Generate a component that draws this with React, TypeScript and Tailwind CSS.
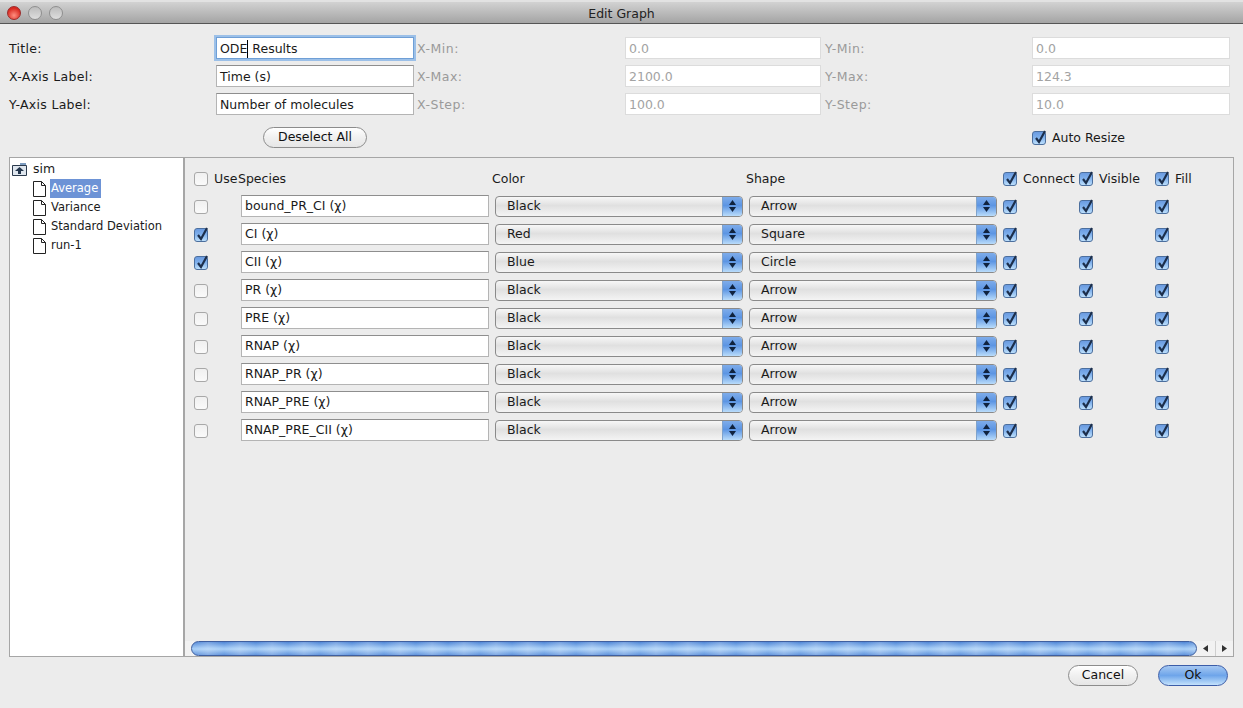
const species = [
  { name: 'bound_PR_CI', color: 'Black', shape: 'Arrow', use: false },
  { name: 'CI', color: 'Red', shape: 'Square', use: true },
  { name: 'CII', color: 'Blue', shape: 'Circle', use: true },
  { name: 'PR', color: 'Black', shape: 'Arrow', use: false },
  { name: 'PRE', color: 'Black', shape: 'Arrow', use: false },
  { name: 'RNAP', color: 'Black', shape: 'Arrow', use: false },
  { name: 'RNAP_PR', color: 'Black', shape: 'Arrow', use: false },
  { name: 'RNAP_PRE', color: 'Black', shape: 'Arrow', use: false },
  { name: 'RNAP_PRE_CII', color: 'Black', shape: 'Arrow', use: false },
]

function Check({ on = false }: { on?: boolean }) {
  return (
    <span
      className={`relative block w-[14px] h-[14px] shrink-0 rounded-[3px] border ${
        on
          ? 'border-[#4c6f9e] bg-[linear-gradient(#6b9be0,#7fb0ec_45%,#bcdffc)]'
          : 'border-[#a8a8a8] bg-[linear-gradient(#f0f0f0,#fafafa)]'
      }`}
    >
      {on && (
        <svg className="absolute left-0 top-[-4px] overflow-visible" width="15" height="17" viewBox="0 0 15 17">
          <path d="M3 10 L6 14 L12 3" fill="none" stroke="#1c2f4c" strokeWidth="2.2" />
        </svg>
      )}
    </span>
  )
}

function TextBox({ value, focused = false, disabled = false, form = false }: { value: string; focused?: boolean; disabled?: boolean; form?: boolean }) {
  return (
    <div
      className={`flex items-center h-[22px] px-[3px] bg-white border whitespace-nowrap ${form ? 'pt-[2px]' : ''} ${
        focused
          ? 'border-[#6f9fd6] shadow-[0_0_0_2px_#9cc0e8]'
          : disabled
            ? 'border-[#dcdcdc] text-[#a3a3a3]'
            : 'border-[#b4b4b4] border-t-[#8e8e8e]'
      }`}
    >
      {focused ? (
        <>
          <span className="border-r border-black">ODE</span>
          <span>&nbsp;Results</span>
        </>
      ) : (
        value
      )}
    </div>
  )
}

function Select({ value }: { value: string }) {
  return (
    <div className="flex h-[21px] rounded-[4px] border border-[#8a8a8a] overflow-hidden bg-[linear-gradient(#f7f7f7,#e0e0e0_45%,#f4f4f4)]">
      <span className="flex-1 pl-[11px] leading-[18px]">{value}</span>
      <span className="flex flex-col items-center justify-center gap-[2px] w-[20px] border-l border-[#7fa3cc] bg-[linear-gradient(#7eacea,#5c95e3_45%,#b9dcfb)]">
        <svg width="7" height="5" viewBox="0 0 7 5"><path d="M3.5 0 L7 5 H0 Z" fill="#10233f" /></svg>
        <svg width="7" height="5" viewBox="0 0 7 5"><path d="M0 0 H7 L3.5 5 Z" fill="#10233f" /></svg>
      </span>
    </div>
  )
}

function Pill({ label, primary = false, width }: { label: string; primary?: boolean; width: string }) {
  return (
    <button
      className={`h-[21px] ${width} rounded-full border text-[#111] ${
        primary
          ? 'border-[#3c5da8] bg-[linear-gradient(#a6c8f2,#6ea5ea_50%,#c4e2fc)]'
          : 'border-[#8c8c8c] bg-[linear-gradient(#ffffff,#f0f0f0_50%,#e6e6e6)]'
      }`}
    >
      {label}
    </button>
  )
}

function FileIcon() {
  return (
    <svg width="13" height="16" viewBox="0 0 13 16" className="shrink-0">
      <path d="M0.5 0.5 H8.5 L12.5 4.5 V15.5 H0.5 Z" fill="#fff" stroke="#222" />
      <path d="M8.5 0.5 V4.5 H12.5" fill="none" stroke="#222" />
    </svg>
  )
}

function FormRow({ label, value, xLabel, xValue, yLabel, yValue, focused }: {
  label: string; value: string; xLabel: string; xValue: string; yLabel: string; yValue: string; focused?: boolean
}) {
  return (
    <>
      <span className="tracking-[0.3px] pt-[2px]">{label}</span>
      <TextBox value={value} focused={focused} form />
      <span className="pl-[3px] pt-[2px] text-[#9a9a9a] tracking-[0.5px]">{xLabel}</span>
      <TextBox value={xValue} disabled form />
      <span className="pl-[4px] pt-[2px] text-[#9a9a9a] tracking-[0.5px]">{yLabel}</span>
      <TextBox value={yValue} disabled form />
    </>
  )
}

export default function App() {
  return (
    <div className="w-[1243px] h-[708px] overflow-hidden flex flex-col bg-[#ececec] text-[12.5px] text-[#1a1a1a] font-['DejaVu_Sans',sans-serif]">
      {/* title bar */}
      <div className="relative h-[24px] shrink-0 flex items-center justify-center border-t-2 border-t-[#e2e2e2] border-b border-b-[#555] bg-[linear-gradient(#d2d2d2,#a4a4a4)]">
        <div className="absolute left-[7px] top-[4px] flex gap-[7px]">
          <span className="w-[14px] h-[14px] rounded-full border border-[#9c2a2a] bg-[radial-gradient(circle_at_50%_70%,#ff8f80,#d8281f_70%)]" />
          <span className="w-[14px] h-[14px] rounded-full border border-[#8f8f8f] bg-[linear-gradient(#bcbcbc,#dedede)]" />
          <span className="w-[14px] h-[14px] rounded-full border border-[#8f8f8f] bg-[linear-gradient(#bcbcbc,#dedede)]" />
        </div>
        <span className="text-[#222] pt-[3px]">Edit Graph</span>
      </div>

      {/* axis fields */}
      <div className="grid grid-cols-[207px_198px_211px_196px_211px_198px] auto-rows-[22px] gap-y-[6px] items-center ml-[9px] mt-[13px]">
        <FormRow label="Title:" value="ODE Results" focused xLabel="X-Min:" xValue="0.0" yLabel="Y-Min:" yValue="0.0" />
        <FormRow label="X-Axis Label:" value="Time (s)" xLabel="X-Max:" xValue="2100.0" yLabel="Y-Max:" yValue="124.3" />
        <FormRow label="Y-Axis Label:" value="Number of molecules" xLabel="X-Step:" xValue="100.0" yLabel="Y-Step:" yValue="10.0" />
      </div>

      <div className="flex items-center h-[21px] mt-[12px]">
        <div className="w-[263px]" />
        <Pill label="Deselect All" width="w-[104px]" />
        <div className="w-[665px]" />
        <div className="flex items-center gap-[6px] pt-[1px]">
          <Check on />
          <span>Auto Resize</span>
        </div>
      </div>

      {/* main split */}
      <div className="flex h-[500px] ml-[9px] mt-[9px] w-[1225px] border border-[#a6a6a6]">
        <div className="w-[173px] shrink-0 bg-white pt-[2px] text-[11.5px]">
          <div className="flex items-center h-[19px] pl-[2px] gap-[6px]">
            <svg width="15" height="13" viewBox="0 0 15 13">
              <path d="M0.5 2.5 H14.5 V12.5 H0.5 Z" fill="#dfe6ee" stroke="#2b3a4d" />
              <path d="M8 0 H14 V2 H8 Z" fill="#7d9cc0" />
              <path d="M7.5 4 L12 8 H9 V11 H6 V8 H3 Z" fill="#24364d" />
            </svg>
            <span className="text-[12.5px]">sim</span>
          </div>
          <div className="flex items-center h-[19px] pl-[23px] gap-[4px]">
            <FileIcon />
            <span className="bg-[#6d93d6] text-white px-[1px] h-[19px] leading-[19px] w-[51px]">Average</span>
          </div>
          <div className="flex items-center h-[19px] pl-[23px] gap-[5px]"><FileIcon /><span>Variance</span></div>
          <div className="flex items-center h-[19px] pl-[23px] gap-[5px]"><FileIcon /><span>Standard Deviation</span></div>
          <div className="flex items-center h-[19px] pl-[23px] gap-[5px]"><FileIcon /><span>run-1</span></div>
        </div>
        <div className="w-[2px] shrink-0 bg-[#a6a6a6]" />
        <div className="flex-1 flex flex-col min-w-0">
          <div className="flex-1 pl-[9px] pt-[6px]">
            <div className="grid grid-cols-[44px_254px_254px_254px_76px_76px_76px] auto-rows-[28px] items-center">
              <div className="flex items-center gap-[6px] pt-[2px]"><Check /><span>Use</span></div>
              <span className="pt-[3px]">Species</span>
              <span className="pt-[3px]">Color</span>
              <span className="pt-[3px]">Shape</span>
              <div className="flex items-center gap-[6px] pl-[3px] pt-[2px] whitespace-nowrap"><Check on /><span>Connect</span></div>
              <div className="flex items-center gap-[6px] pl-[3px] pt-[2px]"><Check on /><span>Visible</span></div>
              <div className="flex items-center gap-[6px] pl-[3px] pt-[2px]"><Check on /><span>Fill</span></div>
              {species.map((s) => (
                <div key={s.name} className="contents">
                  <div className="pt-[2px]"><Check on={s.use} /></div>
                  <div className="ml-[3px] w-[248px]"><TextBox value={`${s.name} (χ)`} /></div>
                  <div className="ml-[3px] w-[248px]"><Select value={s.color} /></div>
                  <div className="ml-[3px] w-[248px]"><Select value={s.shape} /></div>
                  <div className="pl-[3px] pt-[2px]"><Check on /></div>
                  <div className="pl-[3px] pt-[2px]"><Check on /></div>
                  <div className="pl-[3px] pt-[2px]"><Check on /></div>
                </div>
              ))}
            </div>
          </div>
          {/* horizontal scroll bar */}
          <div className="flex items-center h-[15px] bg-[#f2f2f2]">
            <div className="flex-1 h-[15px] ml-[6px] rounded-full border-[1.5px] border-[#3f5f9f] bg-[repeating-linear-gradient(90deg,rgba(255,255,255,0)_0,rgba(255,255,255,0.22)_16px,rgba(255,255,255,0)_32px),linear-gradient(#4f86d6,#9cc6f4_45%,#a8cff7_55%,#5f93dc)]" />
            <div className="flex w-[36px] h-full text-[#333]">
              <span className="flex-1 flex items-center justify-center border-r border-[#cfcfcf]">
                <svg width="5" height="7" viewBox="0 0 5 7"><path d="M5 0 V7 L0 3.5 Z" fill="#333" /></svg>
              </span>
              <span className="flex-1 flex items-center justify-center">
                <svg width="5" height="7" viewBox="0 0 5 7"><path d="M0 0 V7 L5 3.5 Z" fill="#333" /></svg>
              </span>
            </div>
          </div>
        </div>
      </div>

      <div className="flex justify-end gap-[20px] mt-[8px] pr-[15px]">
        <Pill label="Cancel" width="w-[70px]" />
        <Pill label="Ok" primary width="w-[70px]" />
      </div>
    </div>
  )
}
